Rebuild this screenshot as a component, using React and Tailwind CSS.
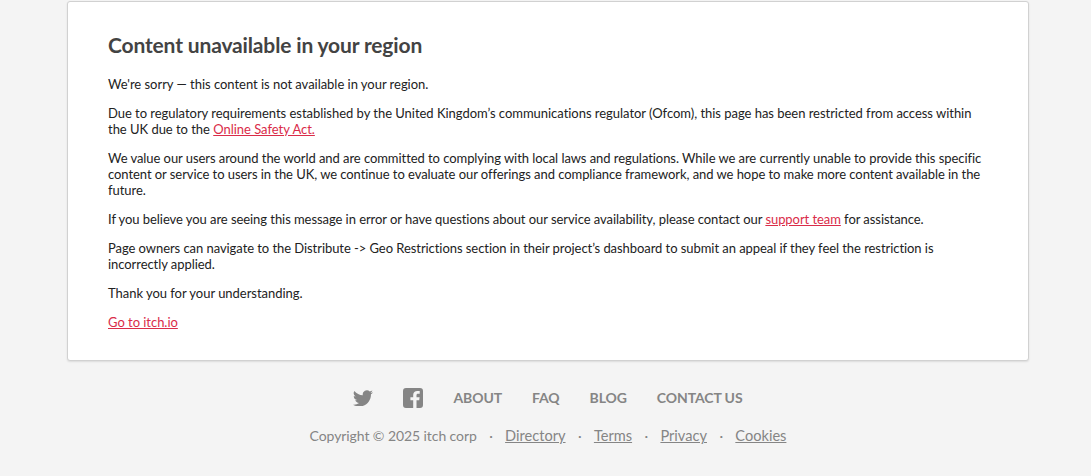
const Link = ({ children }) => <a href="#" className="text-[#da2c49] underline">{children}</a>;
const FootLink = ({ children }) => <a href="#" className="text-[14.6px] tracking-normal text-[#858585] underline">{children}</a>;
const Dot = () => <span className="mx-[12.4px] text-[#858585]">·</span>;
const Nav = ({ children }) => <a href="#" className="text-[#858585] font-bold text-[14px] tracking-[-0.1px] uppercase">{children}</a>;

export default function App() {
  return (
    <div className="min-h-[476px] bg-[#f4f4f4] pl-[5px] pt-px font-['Lato','Liberation_Sans',sans-serif] text-[13px] tracking-[-0.03px] leading-[16px] text-[#222]">
      <div className="mx-auto w-[962px] bg-white border border-[#d1d1d1] rounded-[3px] shadow-[0_1px_2px_rgba(0,0,0,0.1)] px-10 pt-[30px] pb-[30px] flex flex-col gap-[13px]">
        <h2 className="text-[21px] tracking-[-0.15px] leading-[26px] font-bold text-[#434343] mb-[5px]">Content unavailable in your region</h2>
        <p>We're sorry — this content is not available in your region.</p>
        <p>Due to regulatory requirements established by the United Kingdom’s communications regulator (Ofcom), this page has been restricted from access within the UK due to the <Link>Online Safety Act.</Link></p>
        <p className="tracking-[-0.06px]">We value our users around the world and are committed to complying with local laws and regulations. While we are currently unable to provide this specific content or service to users in the UK, we continue to evaluate our offerings and compliance framework, and we hope to make more content available in the future.</p>
        <p className="tracking-[-0.06px]">If you believe you are seeing this message in error or have questions about our service availability, please contact our <Link>support team</Link> for assistance.</p>
        <p className="tracking-[-0.06px]">Page owners can navigate to the Distribute -&gt; Geo Restrictions section in their project’s dashboard to submit an appeal if they feel the restriction is incorrectly applied.</p>
        <p>Thank you for your understanding.</p>
        <p><Link>Go to itch.io</Link></p>
      </div>
      <div className="flex flex-col items-center pt-[27px]">
        <div className="flex items-center gap-[30px]">
          <svg width="20" height="16.7" viewBox="0 2 24 20" fill="#858585"><path d="M23.95 4.57a10 10 0 0 1-2.82.77 4.96 4.96 0 0 0 2.16-2.72 9.9 9.9 0 0 1-3.12 1.19 4.92 4.92 0 0 0-8.38 4.48A13.98 13.98 0 0 1 1.64 3.16a4.92 4.92 0 0 0 1.52 6.57 4.9 4.9 0 0 1-2.23-.62v.06a4.92 4.92 0 0 0 3.95 4.83 5 5 0 0 1-2.21.08 4.94 4.94 0 0 0 4.6 3.42A9.87 9.87 0 0 1 0 19.54a14 14 0 0 0 7.56 2.21c9.05 0 14-7.5 14-13.98 0-.21 0-.42-.02-.63a9.94 9.94 0 0 0 2.41-2.57z" /></svg>
          <svg width="20" height="20" viewBox="1 1 20 20" fill="#858585"><path d="M4 1h14a3 3 0 0 1 3 3v14a3 3 0 0 1-3 3h-3.5v-7.7h2.7l.4-3.1h-3.1V8.3c0-.9.3-1.5 1.5-1.5h1.7V4.1c-.3 0-1.3-.1-2.4-.1-2.4 0-4.1 1.5-4.1 4.1v2.1H8.4v3.1h2.8V21H4a3 3 0 0 1-3-3V4a3 3 0 0 1 3-3z" /></svg>
          <Nav>About</Nav>
          <Nav>FAQ</Nav>
          <Nav>Blog</Nav>
          <Nav>Contact us</Nav>
        </div>
        <div className="mt-[19px] text-[14px] tracking-[-0.08px] leading-[18px] text-[#858585] flex items-center">
          <span>Copyright © 2025 itch corp</span>
          <Dot /><FootLink>Directory</FootLink>
          <Dot /><FootLink>Terms</FootLink>
          <Dot /><FootLink>Privacy</FootLink>
          <Dot /><FootLink>Cookies</FootLink>
        </div>
      </div>
    </div>
  );
}
